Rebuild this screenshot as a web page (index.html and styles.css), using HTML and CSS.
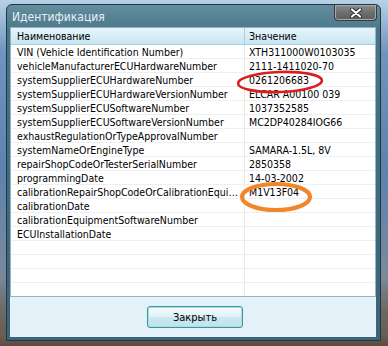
FILE: index.html
```html
<!DOCTYPE html>
<html lang="ru">
<head>
<meta charset="utf-8">
<title>Идентификация</title>
<link rel="stylesheet" href="styles.css">
</head>
<body>
<div class="window">
  <div class="titlebar">
    <span class="title">Идентификация</span>
    <span class="close">
      <svg width="14" height="10" viewBox="0 0 14 10"><path d="M3 1.5 L11 8.5 M11 1.5 L3 8.5" stroke="#2a2a2a" stroke-width="4" stroke-linecap="round"/><path d="M3 1.5 L11 8.5 M11 1.5 L3 8.5" stroke="#ffffff" stroke-width="2.2" stroke-linecap="round"/></svg>
    </span>
  </div>
  <div class="client">
    <div class="list">
      <div class="row head"><div class="c1">Наименование</div><div class="c2">Значение</div></div>
      <div class="row"><div class="c1">VIN (Vehicle Identification Number)</div><div class="c2">XTH311000W0103035</div></div>
      <div class="row"><div class="c1">vehicleManufacturerECUHardwareNumber</div><div class="c2">2111-1411020-70</div></div>
      <div class="row"><div class="c1">systemSupplierECUHardwareNumber</div><div class="c2">0261206683</div></div>
      <div class="row"><div class="c1">systemSupplierECUHardwareVersionNumber</div><div class="c2">ELCAR A00100 039</div></div>
      <div class="row"><div class="c1">systemSupplierECUSoftwareNumber</div><div class="c2">1037352585</div></div>
      <div class="row"><div class="c1">systemSupplierECUSoftwareVersionNumber</div><div class="c2">MC2DP40284IOG66</div></div>
      <div class="row"><div class="c1">exhaustRegulationOrTypeApprovalNumber</div><div class="c2"></div></div>
      <div class="row"><div class="c1">systemNameOrEngineType</div><div class="c2">SAMARA-1.5L, 8V</div></div>
      <div class="row"><div class="c1">repairShopCodeOrTesterSerialNumber</div><div class="c2">2850358</div></div>
      <div class="row"><div class="c1">programmingDate</div><div class="c2">14-03-2002</div></div>
      <div class="row"><div class="c1">calibrationRepairShopCodeOrCalibrationEqui…</div><div class="c2">M1V13F04</div></div>
      <div class="row"><div class="c1">calibrationDate</div><div class="c2"></div></div>
      <div class="row"><div class="c1">calibrationEquipmentSoftwareNumber</div><div class="c2"></div></div>
      <div class="row"><div class="c1">ECUInstallationDate</div><div class="c2"></div></div>
      <div class="row"><div class="c1"></div><div class="c2"></div></div>
      <div class="row"><div class="c1"></div><div class="c2"></div></div>
      <div class="row"><div class="c1"></div><div class="c2"></div></div>
      <div class="row"><div class="c1"></div><div class="c2"></div></div>
    </div>
    <div class="footer">
      <button class="btn">Закрыть</button>
    </div>
  </div>
</div>
<svg class="marks" width="388" height="346" viewBox="0 0 388 346">
  <ellipse cx="280" cy="82" rx="42" ry="10" fill="none" stroke="#d81e1e" stroke-width="2.6" transform="rotate(-2 280 82)"/>
  <ellipse cx="276" cy="197" rx="34" ry="13" fill="none" stroke="#f08628" stroke-width="4.2"/>
</svg>
</body>
</html>
```

FILE: styles.css
```css
html, body {
  margin: 0;
  padding: 0;
}
body {
  width: 388px;
  height: 346px;
  box-sizing: border-box;
  padding: 4px 0 0 6px;
  position: relative;
  overflow: hidden;
  font-family: "DejaVu Sans Condensed", "DejaVu Sans", sans-serif;
  font-size: 10.5px;
  color: #000;
  background:
    linear-gradient(to bottom, rgba(0,0,0,0) 0%, rgba(0,0,0,0) 80%, #6a5d52 97%, #5a4c42 100%),
    linear-gradient(to bottom, #b7d0e6 0%, #6f95bf 15%, #5d83ad 50%, #7a8a9c 80%, #6e6a66 100%);
}
.window {
  width: 375px;
  height: 337px;
  box-sizing: border-box;
  display: flex;
  flex-direction: column;
  padding: 0 4px 3px 3px;
  border: 1px solid #1e3846;
  border-radius: 6px 6px 0 0;
  background: linear-gradient(to bottom, #628e9f 0%, #4a7588 8%, #426c7f 40%, #3c6577 100%);
}
.titlebar {
  height: 22px;
  display: flex;
  justify-content: space-between;
  align-items: flex-start;
}
.title {
  padding: 5px 0 0 2px;
  font-family: "DejaVu Sans Condensed", "DejaVu Sans", sans-serif;
  font-size: 12px;
  color: #e9f0f3;
}
.close {
  width: 43px;
  height: 16px;
  margin-right: -1px;
  box-sizing: border-box;
  display: flex;
  align-items: center;
  justify-content: center;
  border: 1px solid #3a3a3a;
  border-top: none;
  border-radius: 0 0 4px 4px;
  box-shadow: inset 0 0 0 1px #a8a8a8;
  background: linear-gradient(to bottom, #8c8c8c 0%, #6e6e6e 50%, #5c5c5c 100%);
}
.client {
  flex: 1;
  display: flex;
  flex-direction: column;
  background: #e4f1f9;
}
.list {
  height: 270px;
  box-sizing: border-box;
  border: 1px solid #8fb7c7;
  background: #fff;
  overflow: hidden;
}
.row {
  display: grid;
  grid-template-columns: 234px 1fr;
  height: 14px;
  box-sizing: border-box;
  border-bottom: 1px solid #edf0f2;
  line-height: 14px;
}
.row .c1 {
  padding-left: 6px;
  padding-right: 3px;
  border-right: 1px solid #e6e9ec;
  white-space: nowrap;
  overflow: hidden;
}
.row .c2 {
  padding-left: 4px;
  white-space: nowrap;
  overflow: hidden;
}
.row.head {
  height: 17px;
  line-height: 16px;
  border-bottom: 1px solid #a7cede;
  background: linear-gradient(to bottom, #e6f4fa 0%, #d9eef7 50%, #c9e6f2 100%);
}
.row.head .c1 {
  border-right: 1px solid #a7cede;
}
.footer {
  flex: 1;
  display: flex;
  justify-content: center;
  align-items: center;
  padding-left: 4px;
}
.btn {
  width: 96px;
  height: 22px;
  box-sizing: border-box;
  border: 1px solid #3f9599;
  border-radius: 3px;
  box-shadow: inset 0 0 0 1px #a9dfe6;
  background: linear-gradient(to bottom, #f4fbfd 0%, #e2f3f8 45%, #c8e8f0 55%, #bfe3ec 100%);
  font-family: "DejaVu Sans Condensed", "DejaVu Sans", sans-serif;
  font-size: 11px;
  color: #000;
  padding: 0;
}
.marks {
  position: absolute;
  left: 0;
  top: 0;
  pointer-events: none;
}
```
